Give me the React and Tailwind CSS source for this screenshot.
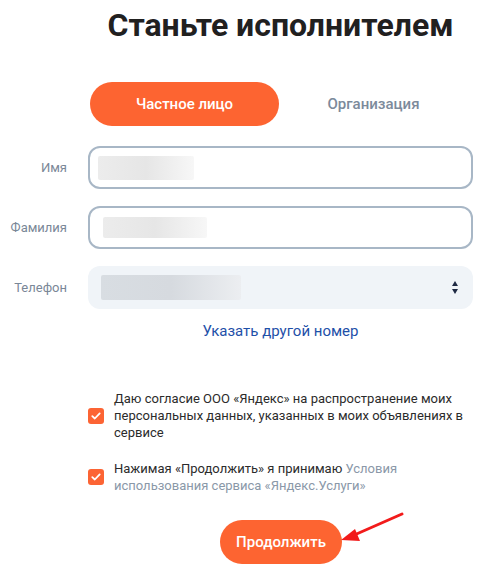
import React, { useState } from "react";

const font = { fontFamily: "Roboto, 'Noto Sans', sans-serif" };

function Blur({ w, h, dark }) {
  return (
    <div
      className={`rounded-[2px] ${dark ? "bg-gradient-to-r from-[#d8dde2] via-[#d6dadf] to-[#eceef1]" : "bg-gradient-to-r from-[#ececec] via-[#e6e6e6] to-[#f7f7f7]"}`}
      style={{ width: w, height: h }}
    />
  );
}

function Check() {
  return (
    <div className="w-4 h-4 rounded-[3px] bg-[#fc6434] flex items-center justify-center shrink-0">
      <svg width="10" height="8" viewBox="0 0 10 8" fill="none">
        <path d="M1.3 4.2 L3.8 6.5 L8.7 1.4" stroke="white" strokeWidth="1.8" strokeLinecap="round" strokeLinejoin="round" />
      </svg>
    </div>
  );
}

export default function App() {
  const [tab, setTab] = useState("person");

  return (
    <div className="w-[490px] h-[574px] bg-white relative overflow-hidden" style={font}>
      <div className="grid grid-cols-[88px_385px]">
        {/* Заголовок */}
        <div />
        <h1 className="text-[32px] leading-[38px] font-bold text-[#21201f] text-center mt-[6px]">
          Станьте исполнителем
        </h1>

        {/* Переключатель */}
        <div />
        <div className="flex items-center mt-[38px]">
          <button
            onClick={() => setTab("person")}
            className={`ml-[2px] w-[189px] h-[44px] rounded-full text-[15px] font-medium ${tab === "person" ? "bg-[#fd6431] text-white" : "text-[#7c8a9b]"}`}
          >
            Частное лицо
          </button>
          <button
            onClick={() => setTab("org")}
            className={`w-[189px] h-[44px] rounded-full text-[15px] font-medium ${tab === "org" ? "bg-[#fd6431] text-white" : "text-[#7c8a9b]"}`}
          >
            Организация
          </button>
        </div>

        {/* Имя */}
        <div className="flex items-center justify-end pr-[21px] text-[13px] text-[#7a8797] mt-[20px]">Имя</div>
        <div className="mt-[20px] h-[43px] rounded-[12px] border-2 border-[#a8b7c6] flex items-center pl-[8px]">
          <Blur w={96} h={24} />
        </div>

        {/* Фамилия */}
        <div className="flex items-center justify-end pr-[21px] text-[13px] text-[#7a8797] mt-[17px]">Фамилия</div>
        <div className="mt-[17px] h-[43px] rounded-[12px] border-2 border-[#a8b7c6] flex items-center pl-[13px]">
          <Blur w={104} h={21} />
        </div>

        {/* Телефон */}
        <div className="flex items-center justify-end pr-[21px] text-[13px] text-[#7a8797] mt-[17px]">Телефон</div>
        <div className="mt-[17px] h-[43px] rounded-[12px] bg-[#f0f4f8] flex items-center justify-between pl-[13px] pr-[15px]">
          <Blur w={140} h={25} dark />
          <svg width="6" height="13" viewBox="0 0 6 13">
            <path d="M3 0 L6 5 L0 5 Z" fill="#1f2a44" />
            <path d="M3 13 L6 8 L0 8 Z" fill="#1f2a44" />
          </svg>
        </div>

        {/* Ссылка */}
        <div />
        <div className="text-center mt-[12px] leading-[20px]">
          <a href="#" className="text-[15px] text-[#1e50a8]">Указать другой номер</a>
        </div>

        {/* Согласия */}
        <div />
        <div className="mt-[49px] flex items-center gap-[10px] pr-[6px]">
          <Check />
          <p className="text-[13px] leading-[17px] text-[#2b2b2b]">
            Даю согласие ООО «Яндекс» на распространение моих персональных данных, указанных в моих объявлениях в сервисе
          </p>
        </div>

        <div />
        <div className="mt-[19px] flex items-center gap-[10px] pr-[6px]">
          <Check />
          <p className="text-[13px] leading-[17px] text-[#2b2b2b]">
            Нажимая «Продолжить» я принимаю{" "}
            <a href="#" className="text-[#8a98a8]">Условия</a>
            <br />
            <a href="#" className="text-[#8a98a8]">использования сервиса «Яндекс.Услуги»</a>
          </p>
        </div>

        {/* Кнопка */}
        <div />
        <div className="mt-[26px] flex">
          <button className="ml-[132px] w-[122px] h-[44px] rounded-full bg-[#fd6431] text-white text-[15px] font-medium">
            Продолжить
          </button>
        </div>
      </div>

      {/* Красная стрелка поверх */}
      <svg className="absolute left-[336px] top-[508px]" width="72" height="40" viewBox="0 0 72 40">
        <path d="M66 6 L16 28" stroke="#f21b1b" strokeWidth="3" strokeLinecap="round" />
        <path d="M5 32 L19 21 L24 33 Z" fill="#f21b1b" />
      </svg>
    </div>
  );
}
